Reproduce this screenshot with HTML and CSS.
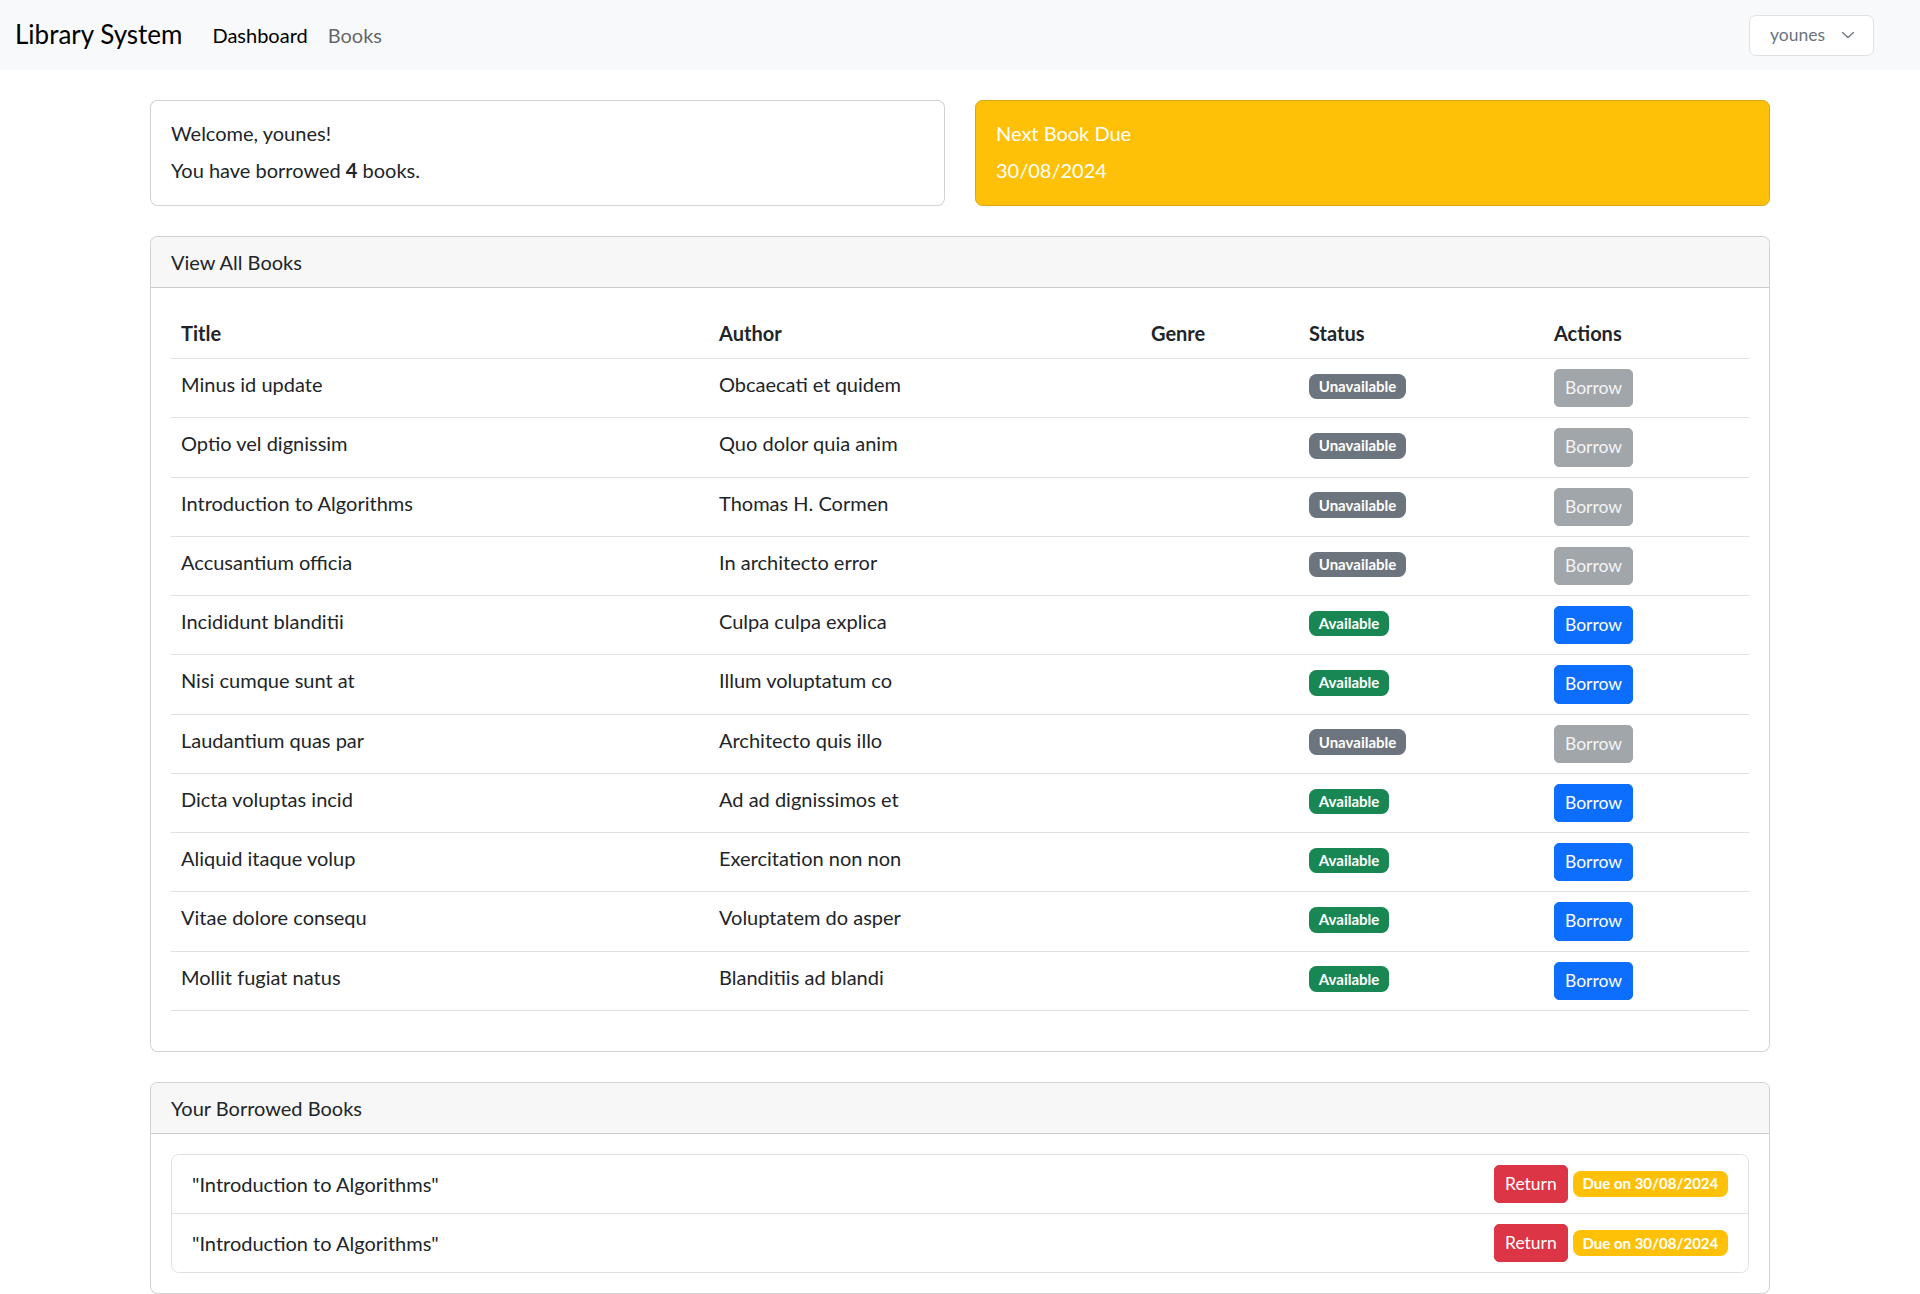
FILE: index.html
```html
<!DOCTYPE html>
<html lang="en">
<head>
<meta charset="utf-8">
<title>Library System</title>
<link rel="stylesheet" href="styles.css">
</head>
<body>
<nav class="navbar">
  <div class="nav-left">
    <a class="brand" href="#">Library System</a>
    <ul class="nav-links">
      <li><a class="nav-link active" href="#">Dashboard</a></li>
      <li><a class="nav-link" href="#">Books</a></li>
    </ul>
  </div>
  <button class="user-btn" type="button">
    <span>younes</span>
    <svg class="chev" width="20" height="20" viewBox="0 0 20 20" fill="none"><path d="M4.5 7.5 L10 12.5 L15.5 7.5" stroke="#6b7280" stroke-width="1.3" stroke-linecap="round" stroke-linejoin="round"/></svg>
  </button>
</nav>

<main class="container">
  <div class="top-row">
    <div class="card info-card">
      <div class="card-body">
        <p class="card-title">Welcome, younes!</p>
        <p class="card-text">You have borrowed <strong>4</strong> books.</p>
      </div>
    </div>
    <div class="card due-card">
      <div class="card-body">
        <p class="card-title">Next Book Due</p>
        <p class="card-text">30/08/2024</p>
      </div>
    </div>
  </div>

  <section class="card section-card">
    <div class="card-header">View All Books</div>
    <div class="card-body">
      <table class="table">
        <colgroup>
          <col class="c-title"><col class="c-author"><col class="c-genre"><col class="c-status"><col class="c-actions">
        </colgroup>
        <thead>
          <tr><th>Title</th><th>Author</th><th>Genre</th><th>Status</th><th>Actions</th></tr>
        </thead>
        <tbody>
          <tr><td>Minus id update</td><td>Obcaecati et quidem</td><td></td><td><span class="badge bg-gray">Unavailable</span></td><td><button class="btn btn-sm btn-disabled">Borrow</button></td></tr>
          <tr><td>Optio vel dignissim</td><td>Quo dolor quia anim</td><td></td><td><span class="badge bg-gray">Unavailable</span></td><td><button class="btn btn-sm btn-disabled">Borrow</button></td></tr>
          <tr><td>Introduction to Algorithms</td><td>Thomas H. Cormen</td><td></td><td><span class="badge bg-gray">Unavailable</span></td><td><button class="btn btn-sm btn-disabled">Borrow</button></td></tr>
          <tr><td>Accusantium officia</td><td>In architecto error</td><td></td><td><span class="badge bg-gray">Unavailable</span></td><td><button class="btn btn-sm btn-disabled">Borrow</button></td></tr>
          <tr><td>Incididunt blanditii</td><td>Culpa culpa explica</td><td></td><td><span class="badge bg-green">Available</span></td><td><button class="btn btn-sm btn-primary">Borrow</button></td></tr>
          <tr><td>Nisi cumque sunt at</td><td>Illum voluptatum co</td><td></td><td><span class="badge bg-green">Available</span></td><td><button class="btn btn-sm btn-primary">Borrow</button></td></tr>
          <tr><td>Laudantium quas par</td><td>Architecto quis illo</td><td></td><td><span class="badge bg-gray">Unavailable</span></td><td><button class="btn btn-sm btn-disabled">Borrow</button></td></tr>
          <tr><td>Dicta voluptas incid</td><td>Ad ad dignissimos et</td><td></td><td><span class="badge bg-green">Available</span></td><td><button class="btn btn-sm btn-primary">Borrow</button></td></tr>
          <tr><td>Aliquid itaque volup</td><td>Exercitation non non</td><td></td><td><span class="badge bg-green">Available</span></td><td><button class="btn btn-sm btn-primary">Borrow</button></td></tr>
          <tr><td>Vitae dolore consequ</td><td>Voluptatem do asper</td><td></td><td><span class="badge bg-green">Available</span></td><td><button class="btn btn-sm btn-primary">Borrow</button></td></tr>
          <tr><td>Mollit fugiat natus</td><td>Blanditiis ad blandi</td><td></td><td><span class="badge bg-green">Available</span></td><td><button class="btn btn-sm btn-primary">Borrow</button></td></tr>
        </tbody>
      </table>
    </div>
  </section>

  <section class="card section-card">
    <div class="card-header">Your Borrowed Books</div>
    <div class="card-body">
      <ul class="list-group">
        <li class="list-item">
          <span>"Introduction to Algorithms"</span>
          <div class="item-actions">
            <button class="btn btn-sm btn-danger">Return</button>
            <span class="badge bg-yellow">Due on 30/08/2024</span>
          </div>
        </li>
        <li class="list-item">
          <span>"Introduction to Algorithms"</span>
          <div class="item-actions">
            <button class="btn btn-sm btn-danger">Return</button>
            <span class="badge bg-yellow">Due on 30/08/2024</span>
          </div>
        </li>
      </ul>
    </div>
  </section>
</main>
</body>
</html>
```
FILE: styles.css
```css
* { box-sizing: border-box; }
html, body { margin: 0; padding: 0; }
body {
  font-family: "Lato", "Liberation Sans", sans-serif;
  font-size: 20px;
  line-height: 1.5;
  color: #212529;
  background: #fff;
}
a { text-decoration: none; }
p { margin: 0; }

/* Navbar */
.navbar {
  height: 70px;
  background: #f8f9fa;
  display: flex;
  align-items: center;
  justify-content: space-between;
  padding: 0 46px 0 15px;
}
.nav-left { display: flex; align-items: center; }
.brand {
  font-size: 26px;
  line-height: 37.5px;
  color: #000;
  margin-right: 20px;
}
.nav-links { list-style: none; margin: 0; padding: 0; display: flex; }
.nav-link {
  display: block;
  padding: 8px 10px;
  color: rgba(0,0,0,.62);
  font-size: 20px;
}
.nav-link.active { color: #000; }

.user-btn {
  display: inline-flex;
  align-items: center;
  height: 41px;
  padding: 0 15px 0 20px;
  background: #fff;
  border: 1px solid #dee2e6;
  border-radius: 7px;
  font-family: inherit;
  font-size: 17.5px;
  color: #6b7280;
  line-height: 20px;
}
.user-btn .chev { margin-left: 13px; }

/* Layout */
.container {
  width: 1620px;
  margin: 30px auto 0;
}
.top-row {
  display: grid;
  grid-template-columns: 1fr 1fr;
  gap: 30px;
  margin-bottom: 30px;
}

/* Cards */
.card {
  border: 1px solid rgba(0,0,0,.175);
  border-radius: 7.5px;
  background: #fff;
}
.card-body { padding: 20px; }
.card-title { line-height: 24px; margin-bottom: 10px; }
.card-text { line-height: 30px; }
.due-card {
  background: #ffc107;
  border-color: #dca512;
  color: #fff;
}
.section-card { margin-bottom: 30px; overflow: hidden; }
.card-header {
  padding: 10px 20px;
  line-height: 30px;
  background: #f7f7f7;
  border-bottom: 1px solid rgba(0,0,0,.175);
}

/* Table */
.table {
  width: 100%;
  border-collapse: collapse;
  table-layout: fixed;
  margin-bottom: 20px;
  vertical-align: top;
}
.c-title { width: 538px; }
.c-author { width: 432px; }
.c-genre { width: 158px; }
.c-status { width: 245px; }
.c-actions { width: 205px; }
.table th, .table td {
  padding: 10px;
  line-height: 30px;
  text-align: left;
  border-bottom: 1px solid #dee2e6;
  vertical-align: top;
}
.table th { font-weight: 700; }

/* Badges & buttons */
.badge {
  display: inline-block;
  padding: 5.25px 9.75px;
  font-size: 15px;
  font-weight: 700;
  line-height: 1;
  color: #fff;
  border-radius: 7.5px;
  vertical-align: baseline;
  white-space: nowrap;
}
.bg-gray { background: #6c757d; }
.bg-green { background: #198754; }
.bg-yellow { background: #ffc107; }

.btn {
  display: inline-block;
  font-family: inherit;
  color: #fff;
  border: 1.25px solid transparent;
  cursor: pointer;
}
.btn-sm {
  padding: 5px 10px;
  font-size: 17.5px;
  line-height: 26.25px;
  border-radius: 5px;
}
.btn-primary { background: #0d6efd; border-color: #0d6efd; }
.btn-disabled { background: #a1a6ab; border-color: #a1a6ab; color: #f4f4f5; }
.btn-danger { background: #dc3545; border-color: #dc3545; }

/* List group */
.list-group {
  list-style: none;
  margin: 0;
  padding: 0;
  border: 1px solid #dee2e6;
  border-radius: 7.5px;
}
.list-item {
  display: flex;
  justify-content: space-between;
  align-items: center;
  padding: 10px 20px;
  line-height: 30px;
}
.list-item + .list-item { border-top: 1px solid #dee2e6; }
.item-actions { display: flex; align-items: center; gap: 5px; }
```
